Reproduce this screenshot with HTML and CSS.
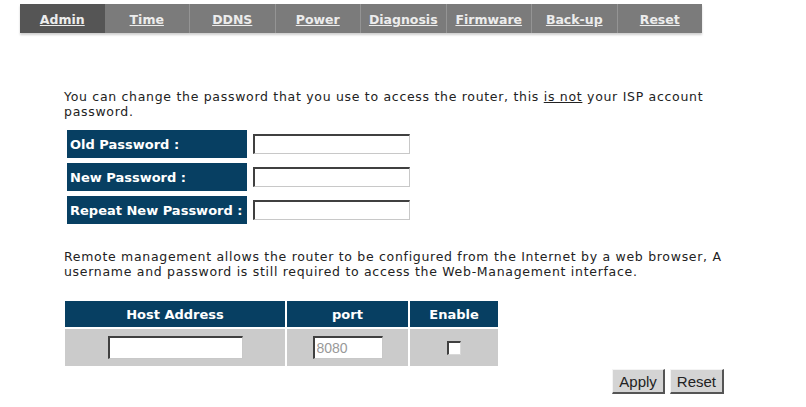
FILE: index.html
```html
<!DOCTYPE html>
<html>
<head>
<meta charset="utf-8">
<link rel="stylesheet" href="styles.css">
</head>
<body>
<div class="tabs">
  <a class="tab active">Admin</a>
  <a class="tab">Time</a>
  <a class="tab">DDNS</a>
  <a class="tab">Power</a>
  <a class="tab">Diagnosis</a>
  <a class="tab">Firmware</a>
  <a class="tab">Back-up</a>
  <a class="tab">Reset</a>
</div>
<div class="content">
  <p class="intro">You can change the password that you use to access the router, this <u>is not</u> your ISP account<br>password.</p>
  <div class="pwgrid">
    <div class="label">Old Password :</div>
    <div class="field"><input class="text pw" type="text"></div>
    <div class="label">New Password :</div>
    <div class="field"><input class="text pw" type="text"></div>
    <div class="label">Repeat New Password :</div>
    <div class="field"><input class="text pw" type="text"></div>
  </div>
  <p class="remote">Remote management allows the router to be configured from the Internet by a web browser, A username and password is still required to access the Web-Management interface.</p>
  <table class="rtable">
    <tr>
      <th class="c1">Host Address</th>
      <th class="c2">port</th>
      <th class="c3">Enable</th>
    </tr>
    <tr>
      <td><input class="text host" type="text"></td>
      <td><input class="text port" type="text" value="8080"></td>
      <td><span class="check"></span></td>
    </tr>
  </table>
  <div class="buttons">
    <button class="btn">Apply</button>
    <button class="btn">Reset</button>
  </div>
</div>
</body>
</html>
```
FILE: styles.css
```css
html, body {
  margin: 0;
  padding: 0;
  background: #ffffff;
}
body {
  font-family: "DejaVu Sans", Verdana, sans-serif;
  font-size: 13px;
  color: #222;
}
.tabs {
  display: flex;
  margin: 4px 0 0 20px;
  width: 682px;
  height: 29px;
  background: #7b7b7b;
  box-shadow: 0 2px 2px #d0d0d0;
}
.tab {
  flex: 1;
  display: flex;
  align-items: center;
  justify-content: center;
  color: #ececec;
  font-weight: bold;
  font-size: 12.5px;
  text-decoration: underline;
  border-left: 1px solid #949494;
  padding-top: 2px;
  box-sizing: border-box;
}
.tab.active {
  background: #555555;
  border-left: none;
}
.tab.active + .tab {
  border-left: none;
}
.content {
  padding-left: 64px;
}
.intro,
.remote {
  font-size: 12.5px;
  letter-spacing: 0.7px;
  line-height: 14.5px;
  width: 668px;
}
.intro {
  margin: 57px 0 0 0;
}
.pwgrid {
  display: grid;
  grid-template-columns: 180px 157px;
  column-gap: 6px;
  row-gap: 5px;
  margin: 11px 0 0 3px;
}
.label {
  background: #073f62;
  color: #fff;
  font-weight: bold;
  font-size: 13px;
  height: 28px;
  display: flex;
  align-items: center;
  padding-left: 3px;
}
.field {
  display: flex;
  align-items: center;
}
.text {
  box-sizing: border-box;
  height: 20px;
  border-style: solid;
  border-width: 2px 1px 1px 2px;
  border-color: #404040 #c8c8c8 #c8c8c8 #404040;
  background: #fff;
  margin: 0;
  padding: 0 2px;
  font-family: "Liberation Sans", Arial, sans-serif;
  font-size: 14px;
  color: #999;
}
.pw {
  width: 157px;
}
.remote {
  margin: 26px 0 0 0;
}
.rtable {
  border-spacing: 2px;
  margin: 20px 0 0 -1px;
}
.rtable th {
  background: #073f62;
  color: #fff;
  font-weight: bold;
  font-size: 13px;
  height: 26px;
  padding: 0;
}
.rtable td {
  background: #cbcbcb;
  height: 37px;
  text-align: center;
  padding: 0;
}
.c1 { width: 220px; }
.c2 { width: 121px; }
.c3 { width: 88px; }
.host {
  width: 135px;
  height: 23px;
  vertical-align: middle;
}
.port {
  width: 70px;
  height: 23px;
  vertical-align: middle;
}
.check {
  display: inline-block;
  width: 11px;
  height: 11px;
  background: #fff;
  border-style: solid;
  border-width: 2px 1px 1px 2px;
  border-color: #404040 #d8d8d8 #d8d8d8 #404040;
  vertical-align: middle;
}
.buttons {
  display: flex;
  justify-content: flex-end;
  gap: 5px;
  width: 660px;
  margin-top: 1px;
}
.btn {
  font-family: "Liberation Sans", Arial, sans-serif;
  font-size: 15px;
  color: #222;
  background: #d4d4d4;
  border-style: solid;
  border-width: 1px 2px 2px 1px;
  border-color: #f4f4f4 #555 #555 #f4f4f4;
  height: 25px;
  padding: 0 6px;
  margin: 0;
}
```
